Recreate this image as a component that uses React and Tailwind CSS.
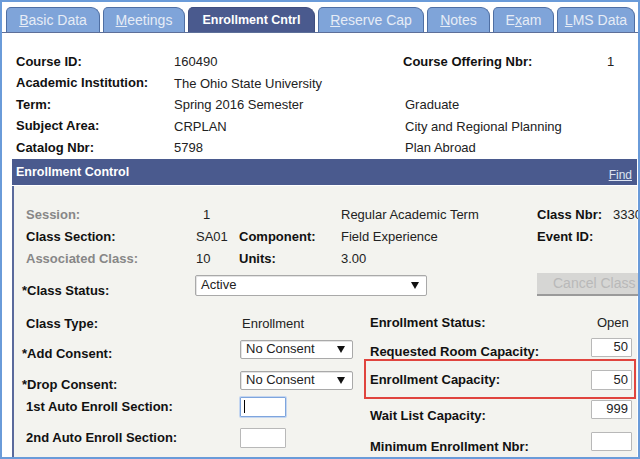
import React from "react";

const Tab = ({ w, active, children }) => (
  <div
    className={`h-[25px] ${w} shrink-0 flex items-center justify-center rounded-tl-[5px] rounded-tr-[9px] border border-b-0 leading-none ${
      active
        ? "bg-[#4a5a8e] border-[#3f4e7e] text-white font-bold text-[12.5px]"
        : "bg-[#7fa4d9] border-[#4f6fa3] text-[#e6ecf6] text-[14px]"
    }`}
  >
    {children}
  </div>
);

const Arrow = () => (
  <svg width="8" height="7" viewBox="0 0 8 7">
    <polygon points="0,0 8,0 4,7" fill="#111" />
  </svg>
);

const Select = ({ w, h, value }) => (
  <div
    className={`${w} ${h} shrink-0 flex items-center justify-between bg-white border border-[#a9a9a9] rounded-[2px] pl-[5px] pr-[7px] text-[13px] text-[#222] shadow-[inset_1px_1px_0_#e4e4e4]`}
  >
    <span>{value}</span>
    <Arrow />
  </div>
);

const Input = ({ w, h, value, focus }) => (
  <div
    className={`${w} ${h} shrink-0 flex items-center bg-white border rounded-[1px] text-[13px] text-[#222] ${
      focus
        ? "border-[#7ea5dd] shadow-[0_0_0_1px_#c4d6f0]"
        : "border-[#b8b8b8] justify-end pr-[3px]"
    }`}
  >
    {focus ? <span className="ml-[3px] w-px h-[13px] bg-black" /> : value}
  </div>
);

const Label = ({ children, gray, star, className = "" }) => (
  <div
    className={`shrink-0 font-bold text-[13px] leading-[16px] ${
      gray ? "text-[#878787]" : "text-[#111]"
    } ${className}`}
  >
    {star ? <span className="-ml-[4px]">*</span> : null}
    {children}
  </div>
);

const info = [
  ["Course ID:", "160490", "Course Offering Nbr:", "1"],
  ["Academic Institution:", "The Ohio State University", "", ""],
  ["Term:", "Spring 2016 Semester", "Graduate", ""],
  ["Subject Area:", "CRPLAN", "City and Regional Planning", ""],
  ["Catalog Nbr:", "5798", "Plan Abroad", ""],
];

const cols = "grid grid-cols-[170px_43px_102px_196px_76px_1fr] h-[22px] items-center";

export default function App() {
  return (
    <div className="relative w-[640px] h-[459px] overflow-hidden bg-white border-2 border-[#6a9bd9] font-['Liberation_Sans',Arial,sans-serif] text-[13px] text-[#222]">
      {/* Tabs */}
      <div className="h-[31px] flex items-end gap-[3px] pl-[4px] pt-[5px] border-b border-[#5d6f99]">
        <Tab w="w-[94px]">
          <span><u>B</u>asic Data</span>
        </Tab>
        <Tab w="w-[82px]">
          <span><u>M</u>eetings</span>
        </Tab>
        <Tab w="w-[127px]" active>
          Enrollment Cntrl
        </Tab>
        <Tab w="w-[106px]">
          <span><u>R</u>eserve Cap</span>
        </Tab>
        <Tab w="w-[63px]">
          <span><u>N</u>otes</span>
        </Tab>
        <Tab w="w-[61px]">
          <span>E<u>x</u>am</span>
        </Tab>
        <Tab w="w-[78px]">
          <span><u>L</u>MS Data</span>
        </Tab>
      </div>

      {/* Course info */}
      <div className="pt-[18px] pl-[14px]">
        {info.map((r, i) => (
          <div
            key={i}
            className="h-[21.5px] grid grid-cols-[158px_229px_204px_1fr] items-center"
          >
            <Label>{r[0]}</Label>
            <div>{r[1]}</div>
            {r[2].endsWith(":") ? (
              <Label>{r[2]}</Label>
            ) : (
              <div className="pl-[2px]">{r[2]}</div>
            )}
            <div>{r[3]}</div>
          </div>
        ))}
      </div>

      {/* Enrollment Control box */}
      <div className="ml-[10px] mr-[1px]">
        <div className="h-[26px] bg-[#4a5a8e] flex items-center justify-between pl-[4px] pr-[5px] pt-[2px]">
          <div className="font-bold text-[12.5px] text-white">
            Enrollment Control
          </div>
          <a className="self-end pb-[1px] text-[12px] text-[#dde4f1] underline">
            Find
          </a>
        </div>
        <div className="h-px bg-white" />
        <div className="h-[300px] bg-[#f3f3ef] border-l-2 border-[#5a6a9c] pt-[18px] pl-[12px] whitespace-nowrap">
          {/* upper rows */}
          <div className={cols}>
            <Label gray>Session:</Label>
            <div className="pl-[7px]">1</div>
            <div />
            <div>Regular Academic Term</div>
            <Label>Class Nbr:</Label>
            <div>33301</div>
          </div>
          <div className={cols}>
            <Label>Class Section:</Label>
            <div>SA01</div>
            <Label>Component:</Label>
            <div>Field Experience</div>
            <Label>Event ID:</Label>
            <div />
          </div>
          <div className={cols}>
            <Label gray>Associated Class:</Label>
            <div>10</div>
            <Label>Units:</Label>
            <div>3.00</div>
            <div />
            <div />
          </div>

          {/* class status */}
          <div className="h-[42px] flex items-start">
            <Label star className="w-[169px] mt-[13px]">
              Class Status:
            </Label>
            <div className="mt-[5px] shrink-0">
              <Select w="w-[232px]" h="h-[21px]" value="Active" />
            </div>
            <div className="shrink-0 ml-[110px] mt-[3px] h-[23px] w-[110px] flex items-center pl-[16px] bg-[#d6d6d4] border-b-2 border-r border-[#9a9a9a] text-[14px] text-[#b9b9b9]">
              Cancel Class
            </div>
          </div>

          {/* lower section */}
          <div className="flex">
            <div className="w-[338px] shrink-0">
              <div className="h-[28px] flex items-start">
                <Label className="w-[214px] mt-[4px]">Class Type:</Label>
                <div className="mt-[4px] ml-[2px] leading-[16px]">Enrollment</div>
              </div>
              <div className="h-[31px] flex items-start">
                <Label star className="w-[214px] mt-[6px]">
                  Add Consent:
                </Label>
                <Select w="w-[113px]" h="h-[19px]" value="No Consent" />
              </div>
              <div className="h-[26px] flex items-start">
                <Label star className="w-[214px] mt-[6px]">
                  Drop Consent:
                </Label>
                <Select w="w-[113px]" h="h-[19px]" value="No Consent" />
              </div>
              <div className="h-[31px] flex items-start">
                <Label className="w-[214px] mt-[2px]">
                  1st Auto Enroll Section:
                </Label>
                <Input w="w-[46px]" h="h-[20px]" focus />
              </div>
              <div className="h-[31px] flex items-start">
                <Label className="w-[214px] mt-[2px]">
                  2nd Auto Enroll Section:
                </Label>
                <Input w="w-[46px]" h="h-[20px]" />
              </div>
            </div>

            <div className="ml-[6px] shrink-0">
              <div className="h-[26px] flex items-start">
                <Label className="w-[221px] mt-[3px]">Enrollment Status:</Label>
                <div className="mt-[3px] ml-[6px] leading-[16px]">Open</div>
              </div>
              <div className="h-[32px] flex items-start">
                <Label className="w-[221px] mt-[6px]">
                  Requested Room Capacity:
                </Label>
                <Input w="w-[41px]" h="h-[19px]" value="50" />
              </div>
              <div className="h-[30px] flex items-start">
                <Label className="w-[221px] mt-[2px]">Enrollment Capacity:</Label>
                <Input w="w-[41px]" h="h-[20px]" value="50" />
              </div>
              <div className="h-[32px] flex items-start">
                <Label className="w-[221px] mt-[8px]">Wait List Capacity:</Label>
                <Input w="w-[41px]" h="h-[19px]" value="999" />
              </div>
              <div className="h-[32px] flex items-start">
                <Label className="w-[221px] mt-[7px]">
                  Minimum Enrollment Nbr:
                </Label>
                <Input w="w-[41px]" h="h-[19px]" />
              </div>
            </div>
          </div>
        </div>
      </div>

      {/* red highlight annotation */}
      <div className="absolute left-[362px] top-[357px] w-[272px] h-[40px] border-2 border-[#e0443e]" />
    </div>
  );
}
